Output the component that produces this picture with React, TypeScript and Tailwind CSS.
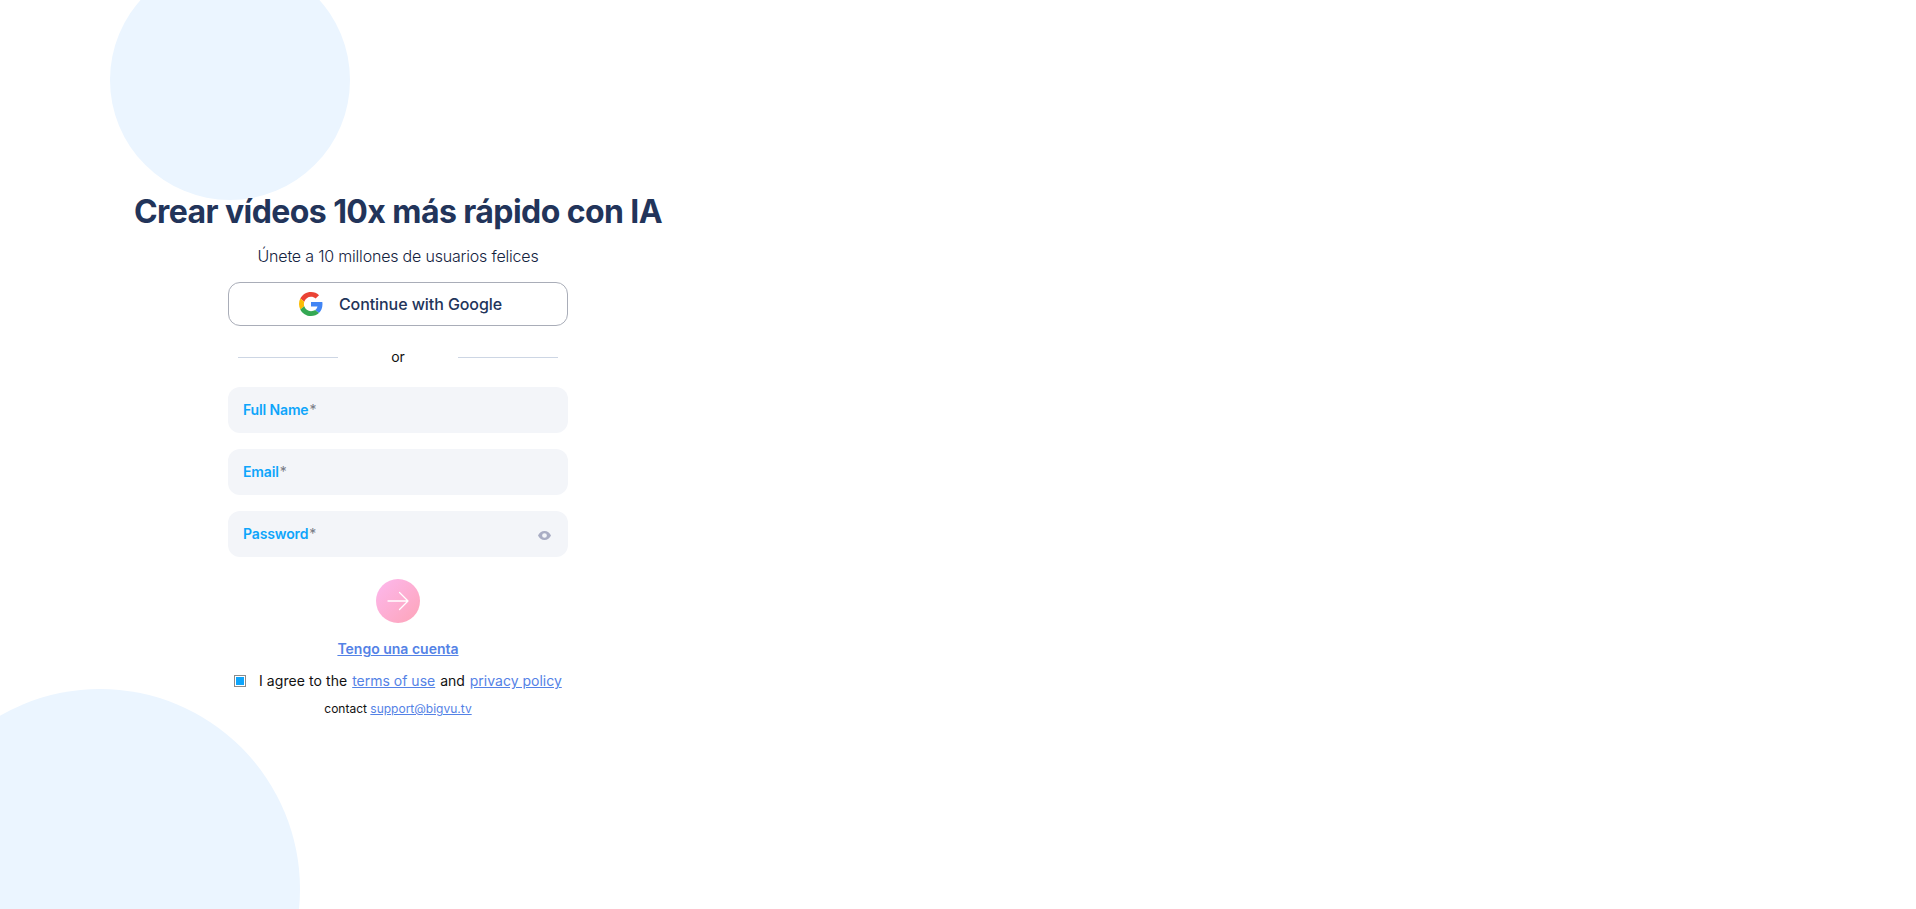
import React from "react";

function GoogleG() {
  return (
    <svg width="24" height="24" viewBox="0 0 48 48">
      <path fill="#EA4335" d="M24 9.5c3.54 0 6.71 1.22 9.21 3.6l6.85-6.85C35.9 2.38 30.47 0 24 0 14.62 0 6.51 5.38 2.56 13.22l7.98 6.19C12.43 13.72 17.74 9.5 24 9.5z" />
      <path fill="#4285F4" d="M46.98 24.55c0-1.57-.15-3.09-.38-4.55H24v9.02h12.94c-.58 2.96-2.26 5.48-4.78 7.18l7.73 6c4.51-4.18 7.09-10.36 7.09-17.65z" />
      <path fill="#FBBC05" d="M10.53 28.59c-.48-1.45-.76-2.99-.76-4.59s.27-3.14.76-4.59l-7.98-6.19C.92 16.46 0 20.12 0 24c0 3.88.92 7.54 2.56 10.78l7.97-6.19z" />
      <path fill="#34A853" d="M24 48c6.48 0 11.93-2.13 15.89-5.81l-7.73-6c-2.15 1.45-4.92 2.3-8.16 2.3-6.26 0-11.57-4.22-13.47-9.91l-7.98 6.19C6.51 42.62 14.62 48 24 48z" />
    </svg>
  );
}

function Field({ label, eye }: { label: string; eye?: boolean }) {
  return (
    <div className="flex h-[46px] w-[340px] items-center justify-between rounded-[12px] bg-[#f3f5f9] pl-[15px] pr-[17px]">
      <span className="text-[14px] font-semibold leading-none tracking-[-0.01em] text-[#0ea5fb]">
        {label}
        <span className="ml-[1px] font-normal text-[#777b85]">*</span>
      </span>
      {eye && (
        <svg width="13" height="9" viewBox="0 0 12 9" preserveAspectRatio="none" className="mt-[3px]">
          <path fill="#a9adc4" fillRule="evenodd" d="M6 0c2.7 0 4.9 1.8 6 4.5C10.900 7.200 8.700 9 6 9S1.100 7.200 0 4.500C1.100 1.800 3.300 0 6 0zm0 2.300a2.200 2.200 0 1 0 0 4.400 2.200 2.200 0 0 0 0-4.400z" />
        </svg>
      )}
    </div>
  );
}

export default function App() {
  return (
    <div className="relative h-[909px] w-full overflow-hidden bg-white font-['Inter',sans-serif]">
      <div className="absolute left-[110px] top-[-40px] h-[240px] w-[240px] rounded-full bg-[#ebf5ff]" />
      <div className="absolute left-[-100px] top-[689px] h-[400px] w-[400px] rounded-full bg-[#ebf5ff]" />

      <div className="relative flex w-[796px] flex-col items-center pt-[191px]">
        <h1 className="text-[32px] font-bold leading-[42px] tracking-[-0.018em] text-[#22345a]">
          Crear vídeos 10x más rápido con IA
        </h1>
        <p className="mt-[11px] text-[16px] font-light leading-[24px] tracking-[-0.012em] text-[#14233f]">
          Únete a 10 millones de usuarios felices
        </p>
        <button className="mt-[14px] flex h-[44px] w-[340px] items-center justify-center gap-[16px] rounded-[12px] border border-[#a9adb8] bg-white pl-[5px]">
          <GoogleG />
          <span className="text-[16px] font-medium tracking-[-0.005em] text-[#22345a]">Continue with Google</span>
        </button>
        <div className="mt-[21px] flex h-[20px] w-[321px] items-center justify-between">
          <div className="h-px w-[100px] bg-[#cdd6e4]" />
          <span className="text-[14px] leading-[20px] text-[#111]">or</span>
          <div className="h-px w-[100px] bg-[#cdd6e4]" />
        </div>
        <div className="mt-[20px] flex flex-col gap-[16px]">
          <Field label="Full Name" />
          <Field label="Email" />
          <Field label="Password" eye />
        </div>
        <button className="mt-[22px] flex h-[44px] w-[44px] items-center justify-center rounded-full bg-gradient-to-br from-[#fdb8ee] to-[#fda4b8]">
          <svg width="24" height="24" viewBox="0 0 24 24" fill="none" stroke="#fff" strokeWidth="1.300" strokeLinecap="round" strokeLinejoin="round">
            <path d="M2 12h20M13.500 3.500 22 12l-8.500 8.500" />
          </svg>
        </button>
        <a className="mt-[16px] text-[14px] font-semibold leading-[20px] text-[#5482e6] underline">Tengo una cuenta</a>
        <div className="mt-[12px] flex w-[340px] items-center text-[14px] leading-[20px] text-[#111]">
          <span className="ml-[6px] flex h-[12px] w-[12px] items-center justify-center border border-[#8b8b8b] bg-white">
            <span className="h-[8px] w-[8px] bg-[#0ea5fb]" />
          </span>
          <span className="ml-[13px] whitespace-nowrap">
            <span className="tracking-[0.005em]">I agree to the</span> <a className="ml-[1px] text-[#5482e6] underline">terms of use</a>{" "}
            <span className="ml-[1px]">and</span> <a className="ml-[1px] text-[#5482e6] underline">privacy policy</a>
          </span>
        </div>
        <p className="mt-[9px] text-[12px] leading-[18px] text-[#111]">
          contact <a className="text-[#5482e6] underline">support@bigvu.tv</a>
        </p>
      </div>
    </div>
  );
}
